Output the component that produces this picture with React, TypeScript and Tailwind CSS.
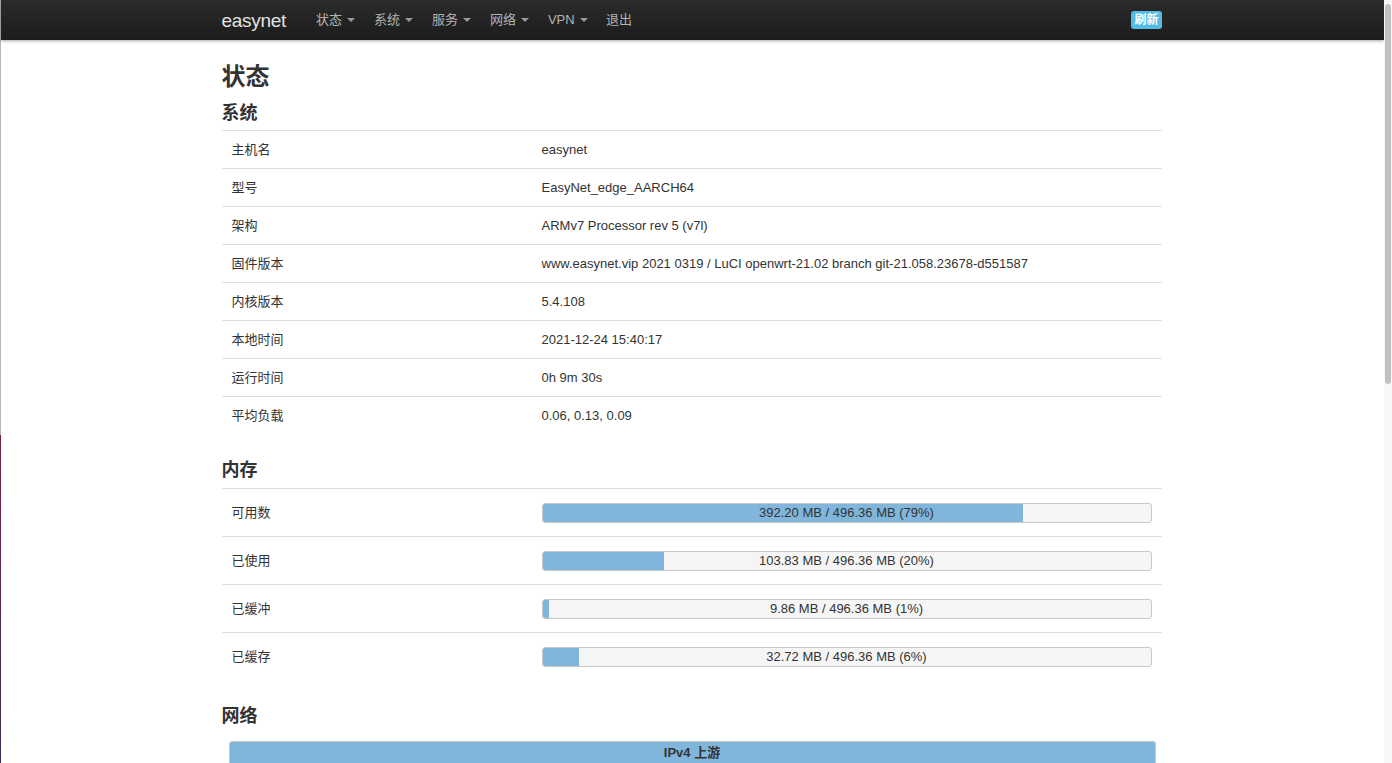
const FONT = { fontFamily: '"Liberation Sans", "Noto Sans CJK SC", Arial, sans-serif' };

const systemRows = [
  ["主机名", "easynet"],
  ["型号", "EasyNet_edge_AARCH64"],
  ["架构", "ARMv7 Processor rev 5 (v7l)"],
  ["固件版本", "www.easynet.vip 2021 0319 / LuCI openwrt-21.02 branch git-21.058.23678-d551587"],
  ["内核版本", "5.4.108"],
  ["本地时间", "2021-12-24 15:40:17"],
  ["运行时间", "0h 9m 30s"],
  ["平均负载", "0.06, 0.13, 0.09"],
];

const memRows = [
  { label: "可用数", text: "392.20 MB / 496.36 MB (79%)", pct: 79 },
  { label: "已使用", text: "103.83 MB / 496.36 MB (20%)", pct: 20 },
  { label: "已缓冲", text: "9.86 MB / 496.36 MB (1%)", pct: 1 },
  { label: "已缓存", text: "32.72 MB / 496.36 MB (6%)", pct: 6 },
];

const menu = ["状态", "系统", "服务", "网络", "VPN"];

function Caret() {
  return <span className="ml-[5px] inline-block h-0 w-0 border-x-[4px] border-t-[4px] border-x-transparent border-t-[#9a9a9a] align-middle" />;
}

export default function App() {
  return (
    <div className="flex h-[763px] w-[1392px] overflow-hidden bg-white text-[13px] text-[#333]" style={FONT}>
      <div className="flex w-px flex-col">
        <div className="h-[435px] bg-[#b5b5b5]" />
        <div className="flex-1 bg-gradient-to-b from-[#7a1f4a] to-[#3a2a5a]" />
      </div>

      <div className="flex min-w-0 flex-1 flex-col">
        <header className="h-10 shrink-0 bg-gradient-to-b from-[#2b2b2b] to-[#1c1c1c] pr-[2px] shadow-[0_1px_3px_rgba(0,0,0,0.35)]">
          <div className="mx-auto flex h-10 w-[940px] items-center">
            <span className="mr-[30px] text-[19px] leading-none tracking-[-0.3px] text-[#e2e2e2]">easynet</span>
            {menu.map((m) => (
              <span key={m} className="flex w-[58px] items-center text-[13px] text-[#b3b3b3]">
                {m}
                <Caret />
              </span>
            ))}
            <span className="text-[13px] text-[#b3b3b3]">退出</span>
            <span className="ml-auto rounded-[3px] bg-[#55bce6] px-[3px] py-[2px] text-[12px] font-bold leading-[14px] text-white">刷新</span>
          </div>
        </header>

        <main className="mx-auto w-[940px] -translate-x-px">
          <h2 className="mt-[22px] text-[24px] font-bold leading-[30px] text-[#333]">状态</h2>
          <h3 className="mt-[9px] mb-[5px] text-[18px] font-bold leading-[24px] text-[#333]">系统</h3>
          <div>
            {systemRows.map(([k, v]) => (
              <div key={k} className="flex h-[38px] items-center border-t border-[#dddddd]">
                <div className="w-[320px] pl-[10px]">{k}</div>
                <div className="flex-1">{v}</div>
              </div>
            ))}
          </div>

          <h3 className="mt-[24px] mb-[6px] text-[18px] font-bold leading-[24px] text-[#333]">内存</h3>
          <div>
            {memRows.map((r) => (
              <div key={r.label} className="flex h-[48px] items-center border-t border-[#dddddd]">
                <div className="w-[320px] pl-[10px]">{r.label}</div>
                <div className="flex-1 pr-[10px]">
                  <div className="relative h-[20px] overflow-hidden rounded-[3px] border border-[#c8c8c8] bg-[#f5f5f5]">
                    <div className="h-full bg-[#80b6db]" style={{ width: `${r.pct}%` }} />
                    <div className="absolute inset-0 flex items-center justify-center leading-none text-[#333]">{r.text}</div>
                  </div>
                </div>
              </div>
            ))}
          </div>

          <h3 className="mt-[24px] mb-[13px] text-[18px] font-bold leading-[24px] text-[#333]">网络</h3>
          <div className="ml-[7px] mr-[6px] rounded-t-[3px] border border-[#c8c8c8] bg-[#80b6db] py-[2px] text-center text-[13px] font-bold leading-[17px] text-[#333]">
            IPv4 上游
          </div>
        </main>
      </div>

      <div className="flex w-[8px] flex-col bg-[#f7f7f7] pt-[4px]">
        <div className="mx-auto h-[380px] w-[6px] rounded-full bg-[#c1c1c1]" />
      </div>
    </div>
  );
}
